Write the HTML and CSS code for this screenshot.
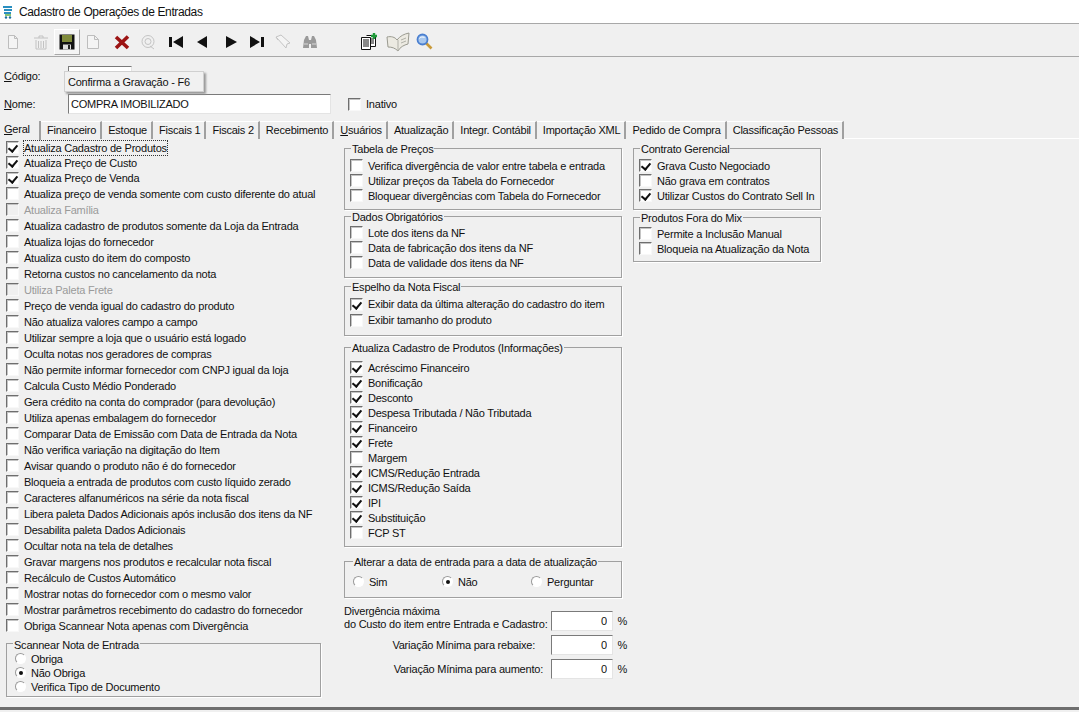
FILE: index.html
```html
<!DOCTYPE html>
<html lang="pt-br">

<head>
  <meta charset="utf-8" />
  <title>Cadastro de Operações de Entradas</title>
  <link rel="stylesheet" href="styles.css">
</head>

<body>
  <div class="titlebar">
    <svg class="appicon" width="12" height="14" viewBox="0 0 12 14"><path d="M1 2h9M2 5h8M2 8h7" stroke="#2a8fc0" stroke-width="2"/><path d="M3 10h6" stroke="#5fae4a" stroke-width="1.5"/><circle cx="4" cy="12.500" r="1.200" fill="#1c6f9c"/><circle cx="8" cy="12.500" r="1.200" fill="#1c6f9c"/></svg>
    <span>Cadastro de Operações de Entradas</span>
  </div>

  <div class="toolbar">
    <div class="tb"><svg width="14" height="16" viewBox="0 0 14 16"><path d="M2.500 1.500h6l3 3v10h-9zM8.500 1.500v3h3" fill="#f4f4f4" stroke="#bdbdbd"/></svg></div>
    <div class="tb m2"><svg width="16" height="18" viewBox="0 0 16 18"><path d="M1 5h14M6 5V3h4v2M3 7v9h10V7M5.500 8v7M8 8v7M10.500 8v7" fill="none" stroke="#c2c2c2"/></svg></div>
    <div class="tb tb-on"><svg width="16" height="16" viewBox="0 0 16 16"><rect x=".5" y=".5" width="15" height="15" fill="#111"/><rect x="3" y="1" width="10" height="7" fill="#7f8a3a"/><rect x="4" y="10.500" width="8" height="5" fill="#ddd"/><rect x="9" y="11" width="2" height="4" fill="#222"/></svg></div>
    <div class="tb"><svg width="14" height="16" viewBox="0 0 14 16"><path d="M1.500 1.500h7l4 4v9h-11zM8.500 1.500v4h4" fill="#f4f4f4" stroke="#bdbdbd"/></svg></div>
    <div class="tb m3"><svg width="16" height="16" viewBox="0 0 16 16"><path d="M2 3l12 11M14 2.500L2 14" stroke="#9c1414" stroke-width="3.600"/></svg></div>
    <div class="tb"><svg width="16" height="16" viewBox="0 0 16 16"><circle cx="8" cy="7.500" r="6" fill="none" stroke="#c4c4c4"/><circle cx="8" cy="7.500" r="3" fill="none" stroke="#c4c4c4"/><path d="M10 12l4 3" stroke="#c4c4c4"/></svg></div>
    <div class="tb m2"><svg width="16" height="12" viewBox="0 0 16 12"><path d="M1 1h3v10H1zM15 0v12L5 6z" fill="#111"/></svg></div>
    <div class="tb"><svg width="12" height="12" viewBox="0 0 12 12"><path d="M11 0v12L1 6z" fill="#111"/></svg></div>
    <div class="tb m3"><svg width="12" height="12" viewBox="0 0 12 12"><path d="M1 0v12l11-6z" fill="#111"/></svg></div>
    <div class="tb"><svg width="16" height="12" viewBox="0 0 16 12"><path d="M12 1h3v10h-3zM1 0v12l10-6z" fill="#111"/></svg></div>
    <div class="tb"><svg width="16" height="16" viewBox="0 0 16 16"><path d="M1 3l5-2 9 8-3 1-1 4zM1 3l2 3" fill="#f4f4f4" stroke="#c4c4c4"/></svg></div>
    <div class="tb m1"><svg width="16" height="14" viewBox="0 0 16 14"><path d="M2 5l2-4h2l1 4v8H1zM14 5l-2-4h-2L9 5v8h6zM7 5h2v4H7z" fill="#9a9a9a"/><path d="M2 9h4M10 9h4" stroke="#d8d8d8"/></svg></div>
    <div class="tb gap-big"><svg width="19" height="18" viewBox="0 0 19 18"><path d="M1.500 4.500h9v12h-9zM6.500 2.500h9v11h-5" fill="#fff" stroke="#111"/><path d="M3 7h6M3 9h6M3 11h6M3 13h6M11 6h3M11 8h3M11 10h3" stroke="#111"/><path d="M11 3h6M14 0v6" stroke="#1f9a3a" stroke-width="2.400"/></svg></div>
    <div class="tb m3"><svg width="24" height="20" viewBox="0 0 24 20"><path d="M1 5c4-1 8 0 10 3 3-4 7-6 12-7l-1 11c-4 1-8 3-10 7-3-3-6-4-10-4z" fill="#eceae2" stroke="#9a9a90"/><path d="M12 8v11M15 8l5-2M15 11l5-2" stroke="#b0b0a8"/></svg></div>
    <div class="tb"><svg width="17" height="17" viewBox="0 0 17 17"><path d="M10 10l5.500 5.500" stroke="#c99a3a" stroke-width="2.600"/><circle cx="6.500" cy="6.500" r="5" fill="#a9c8ee" stroke="#4a7fd0" stroke-width="1.800"/><path d="M3.500 5.500c1-1.500 3-2 5-1" stroke="#fff" fill="none"/></svg></div>
  </div>

  <div class="header">
    <div class="field-row code-row">
      <label class="field-label"><u>C</u>ódigo:</label>
      <input class="text-input code-input" type="text">
    </div>
    <div class="field-row">
      <label class="field-label"><u>N</u>ome:</label>
      <input class="text-input name-input" type="text" value="COMPRA IMOBILIZADO">
      <span class="opt inativo"><i class="chk"></i>Inativo</span>
    </div>
    <div class="tooltip">Confirma a Gravação - F6</div>
  </div>

  <div class="tabs">
    <div class="tab tab-on"><u>G</u>eral</div>
    <div class="tab">Financeiro</div>
    <div class="tab">Estoque</div>
    <div class="tab">Fiscais 1</div>
    <div class="tab">Fiscais 2</div>
    <div class="tab">Recebimento</div>
    <div class="tab"><u>U</u>suários</div>
    <div class="tab">Atualização</div>
    <div class="tab">Integr. Contábil</div>
    <div class="tab">Importação XML</div>
    <div class="tab">Pedido de Compra</div>
    <div class="tab">Classificação Pessoas</div>
  </div>

  <div class="content">
    <div class="col-left">
      <div class="list-16">
        <span class="opt"><i class="chk on"></i><b class="focus">Atualiza Cadastro de Produtos</b></span>
        <span class="opt"><i class="chk on"></i>Atualiza Preço de Custo</span>
        <span class="opt"><i class="chk on"></i>Atualiza Preço de Venda</span>
        <span class="opt"><i class="chk"></i>Atualiza preço de venda somente com custo diferente do atual</span>
        <span class="opt off"><i class="chk"></i>Atualiza Família</span>
        <span class="opt"><i class="chk"></i>Atualiza cadastro de produtos somente da Loja da Entrada</span>
        <span class="opt"><i class="chk"></i>Atualiza lojas do fornecedor</span>
        <span class="opt"><i class="chk"></i>Atualiza custo do item do composto</span>
        <span class="opt"><i class="chk"></i>Retorna custos no cancelamento da nota</span>
        <span class="opt off"><i class="chk"></i>Utiliza Paleta Frete</span>
        <span class="opt"><i class="chk"></i>Preço de venda igual do cadastro do produto</span>
        <span class="opt"><i class="chk"></i>Não atualiza valores campo a campo</span>
        <span class="opt"><i class="chk"></i>Utilizar sempre a loja que o usuário está logado</span>
        <span class="opt"><i class="chk"></i>Oculta notas nos geradores de compras</span>
        <span class="opt"><i class="chk"></i>Não permite informar fornecedor com CNPJ igual da loja</span>
        <span class="opt"><i class="chk"></i>Calcula Custo Médio Ponderado</span>
        <span class="opt"><i class="chk"></i>Gera crédito na conta do comprador (para devolução)</span>
        <span class="opt"><i class="chk"></i>Utiliza apenas embalagem do fornecedor</span>
        <span class="opt"><i class="chk"></i>Comparar Data de Emissão com Data de Entrada da Nota</span>
        <span class="opt"><i class="chk"></i>Não verifica variação na digitação do Item</span>
        <span class="opt"><i class="chk"></i>Avisar quando o produto não é do fornecedor</span>
        <span class="opt"><i class="chk"></i>Bloqueia a entrada de produtos com custo líquido zerado</span>
        <span class="opt"><i class="chk"></i>Caracteres alfanuméricos na série da nota fiscal</span>
        <span class="opt"><i class="chk"></i>Libera paleta Dados Adicionais após inclusão dos itens da NF</span>
        <span class="opt"><i class="chk"></i>Desabilita paleta Dados Adicionais</span>
        <span class="opt"><i class="chk"></i>Ocultar nota na tela de detalhes</span>
        <span class="opt"><i class="chk"></i>Gravar margens nos produtos e recalcular nota fiscal</span>
        <span class="opt"><i class="chk"></i>Recálculo de Custos Automático</span>
        <span class="opt"><i class="chk"></i>Mostrar notas do fornecedor com o mesmo valor</span>
        <span class="opt"><i class="chk"></i>Mostrar parâmetros recebimento do cadastro do fornecedor</span>
        <span class="opt"><i class="chk"></i>Obriga Scannear Nota apenas com Divergência</span>
      </div>
      <fieldset class="group g-scan">
        <legend>Scannear Nota de Entrada</legend>
        <span class="opt opt-r"><i class="rad"></i>Obriga</span>
        <span class="opt opt-r"><i class="rad on"></i>Não Obriga</span>
        <span class="opt opt-r"><i class="rad"></i>Verifica Tipo de Documento</span>
      </fieldset>
    </div>

    <div class="col-mid">
      <fieldset class="group g-tab">
        <legend>Tabela de Preços</legend>
        <span class="opt"><i class="chk"></i>Verifica divergência de valor entre tabela e entrada</span>
        <span class="opt"><i class="chk"></i>Utilizar preços da Tabela do Fornecedor</span>
        <span class="opt"><i class="chk"></i>Bloquear divergências com Tabela do Fornecedor</span>
      </fieldset>
      <fieldset class="group g-dados">
        <legend>Dados Obrigatórios</legend>
        <span class="opt"><i class="chk"></i>Lote dos itens da NF</span>
        <span class="opt"><i class="chk"></i>Data de fabricação dos itens da NF</span>
        <span class="opt"><i class="chk"></i>Data de validade dos itens da NF</span>
      </fieldset>
      <fieldset class="group g-esp">
        <legend>Espelho da Nota Fiscal</legend>
        <span class="opt"><i class="chk on"></i>Exibir data da última alteração do cadastro do item</span>
        <span class="opt"><i class="chk"></i>Exibir tamanho do produto</span>
      </fieldset>
      <fieldset class="group g-info">
        <legend>Atualiza Cadastro de Produtos (Informações)</legend>
        <span class="opt"><i class="chk on"></i>Acréscimo Financeiro</span>
        <span class="opt"><i class="chk on"></i>Bonificação</span>
        <span class="opt"><i class="chk on"></i>Desconto</span>
        <span class="opt"><i class="chk on"></i>Despesa Tributada / Não Tributada</span>
        <span class="opt"><i class="chk on"></i>Financeiro</span>
        <span class="opt"><i class="chk on"></i>Frete</span>
        <span class="opt"><i class="chk"></i>Margem</span>
        <span class="opt"><i class="chk on"></i>ICMS/Redução Entrada</span>
        <span class="opt"><i class="chk on"></i>ICMS/Redução Saída</span>
        <span class="opt"><i class="chk on"></i>IPI</span>
        <span class="opt"><i class="chk on"></i>Substituição</span>
        <span class="opt"><i class="chk"></i>FCP ST</span>
      </fieldset>
      <fieldset class="group g-data">
        <legend>Alterar a data de entrada para a data de atualização</legend>
        <div class="radio-row">
          <span class="opt opt-r"><i class="rad"></i>Sim</span>
          <span class="opt opt-r"><i class="rad on"></i>Não</span>
          <span class="opt opt-r"><i class="rad"></i>Perguntar</span>
        </div>
      </fieldset>
      <div class="pct-block">
        <div class="pct-row pct-first">
          <span class="pct-label left">Divergência máxima<br>do Custo do item entre Entrada e Cadastro:</span>
          <input class="text-input pct-input" type="text" value="0"><span class="pct-sign">%</span>
        </div>
        <div class="pct-row">
          <span class="pct-label lb-reb">Variação Mínima para rebaixe:</span>
          <input class="text-input pct-input" type="text" value="0"><span class="pct-sign">%</span>
        </div>
        <div class="pct-row">
          <span class="pct-label lb-aum">Variação Mínima para aumento:</span>
          <input class="text-input pct-input" type="text" value="0"><span class="pct-sign">%</span>
        </div>
      </div>
    </div>

    <div class="col-right">
      <fieldset class="group g-cont">
        <legend>Contrato Gerencial</legend>
        <span class="opt"><i class="chk on"></i>Grava Custo Negociado</span>
        <span class="opt"><i class="chk"></i>Não grava em contratos</span>
        <span class="opt"><i class="chk on"></i>Utilizar Custos do Contrato Sell In</span>
      </fieldset>
      <fieldset class="group g-mix">
        <legend>Produtos Fora do Mix</legend>
        <span class="opt"><i class="chk"></i>Permite a Inclusão Manual</span>
        <span class="opt"><i class="chk"></i>Bloqueia na Atualização da Nota</span>
      </fieldset>
    </div>
  </div>

  <div class="statusline"></div>
</body>

</html>
```

FILE: styles.css
```css
*{margin:0;padding:0;box-sizing:border-box;}
html,body{height:712px;overflow:hidden;}
body{background:#f0f0f0;color:#111;font:11px/14px "Liberation Sans",Arial,sans-serif;letter-spacing:-.22px;display:flex;flex-direction:column;}

/* barra de titulo */
.titlebar{height:24px;background:#fff;border-bottom:1px solid #a8a8a8;display:flex;align-items:center;padding-left:2px;font-size:12px;letter-spacing:-.36px;}
.titlebar span{margin-left:5px;}

/* toolbar */
.toolbar{height:33px;border-bottom:1px solid #a8a8a8;display:flex;align-items:center;padding-top:3px;}
.tb{width:26px;height:26px;flex:none;display:flex;align-items:center;justify-content:center;}
.tb-on{border:1px solid;border-color:#fff #a8a8a8 #a8a8a8 #fff;background:#f4f4f4;}
.m1{margin-left:1px;}
.m2{margin-left:2px;}
.m3{margin-left:3px;}
.gap-big{margin-left:33px;}

/* cabecalho */
.header{position:relative;height:63px;flex:none;padding:9px 0 0 4px;}
.field-row{display:flex;align-items:center;height:20px;}
.code-row{margin-bottom:8px;}
.field-label{width:64px;flex:none;}
.text-input{height:20px;background:#fff;border:1px solid;border-color:#7a7a7a #e4e4e4 #e4e4e4 #7a7a7a;font:inherit;letter-spacing:inherit;color:#111;padding:0 2px;outline:none;}
.code-input{width:64px;}
.name-input{width:263px;}
.inativo{margin-left:17px;height:14px;}
.tooltip{position:absolute;left:64px;top:14px;width:140px;height:21px;background:#f1f1f1;border:1px solid #d0d0d0;box-shadow:2px 2px 2px #9a9a9a;padding:3px 3px;white-space:nowrap;}

/* abas */
.tabs{display:flex;height:19px;flex:none;border-bottom:1px solid #fff;padding-top:1px;}
.tab{height:18px;padding:1px 4px 0 6px;border-right:2px solid #a0a0a0;white-space:nowrap;background:#f0f0f0;border-top:1px solid #fff;}
.tab-on{width:41px;padding-left:4px;height:19px;border-top:0;z-index:1;}

/* conteudo */
.content{flex:1;display:flex;min-height:0;}
.col-left{width:344px;flex:none;padding:1px 0 0 6px;}
.col-mid{width:289px;flex:none;}
.col-right{width:190px;flex:none;}
.list-16{display:flex;flex-direction:column;}
.list-16 .opt{height:16px;}
.list-16 .opt:nth-child(-n+3){height:15.33px;}
.opt{display:flex;align-items:center;white-space:nowrap;height:15px;flex:none;}
.off{color:#9a9a9a;}
.focus{font-weight:normal;outline:1px dotted #333;}

.chk,.rad{flex:none;display:inline-block;position:relative;background:#fff;}
.chk{width:13px;height:13px;margin-right:5px;border:1px solid;border-color:#6e6e6e #f8f8f8 #f8f8f8 #6e6e6e;box-shadow:inset 1px 1px 0 #c4c4c4;}
.off .chk{background:#f0f0f0;}
.chk.on::after{content:"";position:absolute;left:3px;top:1px;width:4px;height:7px;border:solid #111;border-width:0 2px 2px 0;transform:rotate(40deg);}
.rad{width:11px;height:11px;border-radius:50%;margin:0 5px 0 1px;border:1px solid;border-color:#9a9a9a #fff #fff #9a9a9a;}
.rad.on::after{content:"";position:absolute;left:3px;top:3px;width:4px;height:4px;border-radius:50%;background:#111;}
.opt-r{margin-left:2px;}

/* grupos */
.group{border:1px solid #a0a0a0;box-shadow:1px 1px 0 #fff;padding:0 0 0 5px;display:flex;flex-direction:column;}
.group legend{margin-left:1px;line-height:12px;padding:2px 1px 0;}
.g-scan{width:315px;height:60px;margin-top:3px;padding-top:1px;}
.g-scan .opt{height:14px;}
.g-tab{width:278px;height:69px;margin-top:2px;padding-top:3px;}
.g-dados{width:278px;height:69px;margin-top:-1px;padding-top:2px;}
.g-esp{width:278px;height:57px;margin-top:1px;padding-top:3px;}
.g-esp .opt{height:16px;}
.g-info{width:278px;height:207px;margin-top:4px;padding-top:6px;}
.g-data{width:278px;height:44px;margin-top:7px;}
.g-data legend{margin-left:3px;}
.g-cont{width:188px;height:69px;margin-top:2px;padding-top:3px;}
.g-mix{width:188px;height:52px;margin-top:0;padding-top:2px;}
.radio-row{display:flex;margin-top:6px;}
.radio-row .opt:nth-child(1),.radio-row .opt:nth-child(2){width:87px;}

/* percentuais */
.pct-block{width:283px;margin-top:13px;}
.pct-row{display:flex;align-items:center;height:20px;margin-bottom:4px;}
.pct-label{flex:1;min-width:0;text-align:right;padding-right:5px;white-space:nowrap;}
.pct-first .left{text-align:left;line-height:13px;margin-top:-6px;}
.lb-reb{padding-right:16px;}
.lb-aum{padding-right:8px;}
.pct-input{width:62px;flex:none;text-align:right;padding-right:5px;}
.pct-sign{width:14px;flex:none;text-align:right;}

.statusline{height:3px;flex:none;background:#6e6e6e;margin-bottom:2px;}
```
